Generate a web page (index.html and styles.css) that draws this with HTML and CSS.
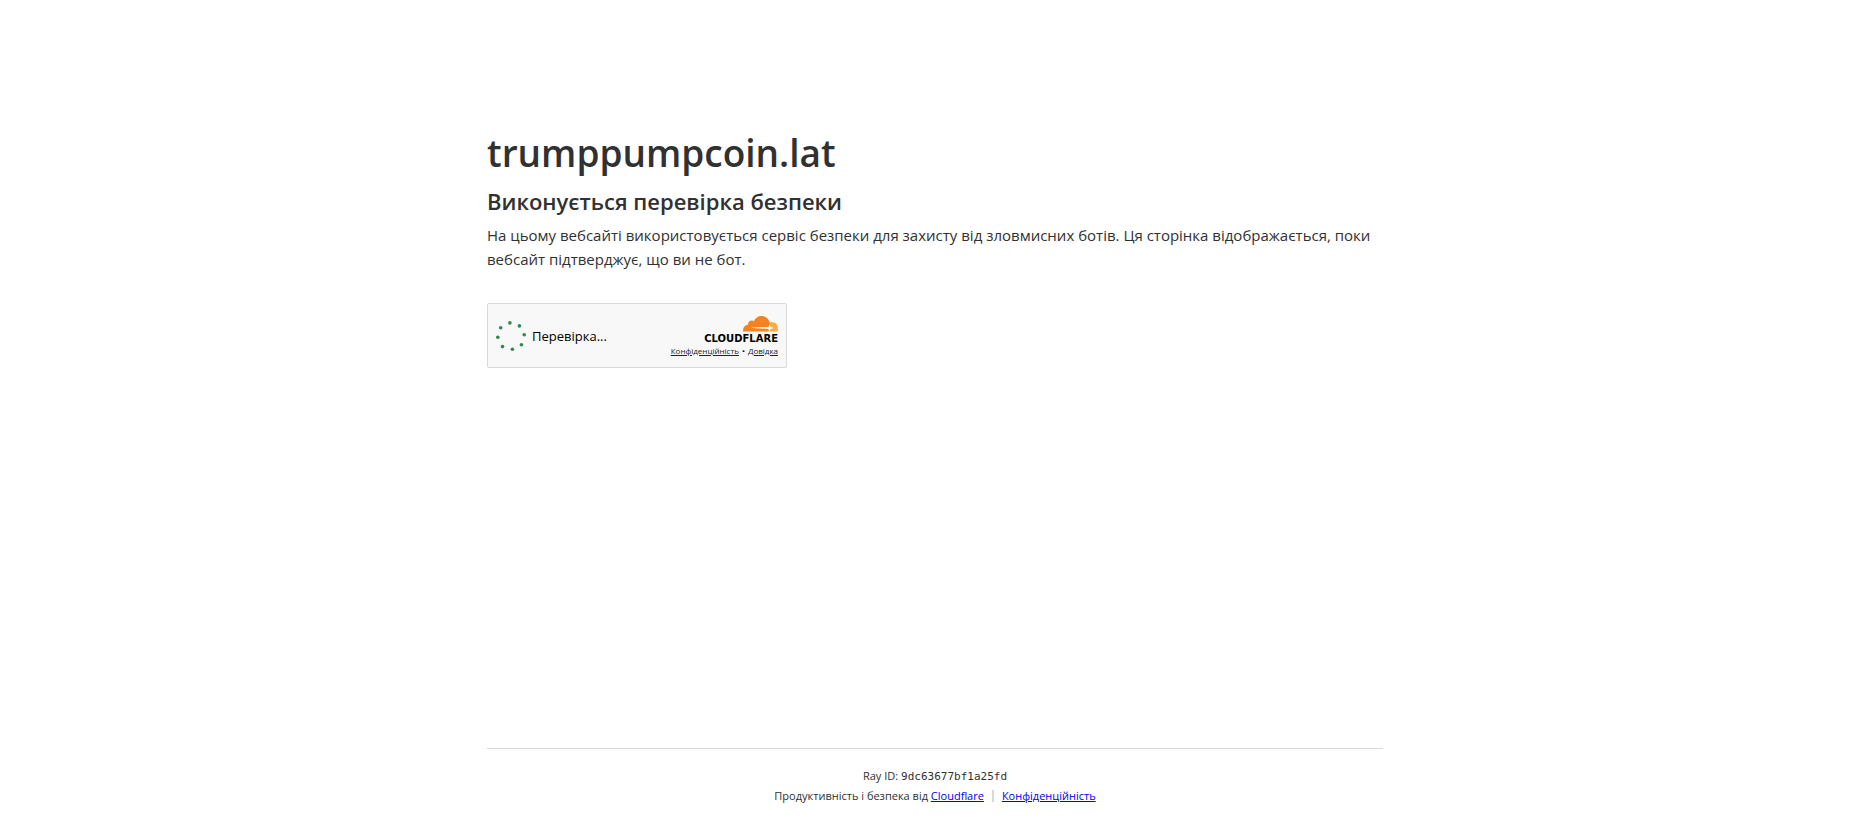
FILE: index.html
```html
<!DOCTYPE html>
<html lang="uk">
<head>
<meta charset="utf-8">
<meta name="viewport" content="width=device-width, initial-scale=1">
<title>trumppumpcoin.lat</title>
<link rel="stylesheet" href="styles.css">
</head>
<body>
<main class="main">
  <h1 class="host">trumppumpcoin.lat</h1>
  <h2 class="title">Виконується перевірка безпеки</h2>
  <p class="lead">На цьому вебсайті використовується сервіс безпеки для захисту від зловмисних ботів. Ця сторінка відображається, поки вебсайт підтверджує, що ви не бот.</p>
  <section class="widget">
    <div class="status" role="status">
      <svg class="spinner" viewBox="0 0 30 30" aria-hidden="true">
        <g fill="#2b8a4b">
          <circle cx="13.9" cy="1.9" r="1.8"/><circle cx="23.4" cy="4.9" r="1.8"/>
          <circle cx="28.2" cy="13.8" r="1.8"/><circle cx="25.4" cy="23.7" r="1.8"/>
          <circle cx="16.4" cy="28.2" r="1.8"/><circle cx="6.5" cy="25.6" r="1.8"/>
          <circle cx="1.8" cy="16.3" r="1.8"/><circle cx="4.7" cy="6.7" r="1.8"/>
        </g>
      </svg>
      <span>Перевірка...</span>
    </div>
    <div class="brand">
      <svg class="cloud" viewBox="0 0 35 16" aria-hidden="true">
        <path fill="#fbad41" d="M28.6 6.1C32.2 6.1 35 8.9 35 12.4q0 1.8-.5 3.1H22l2-5.2 3.900-4.200z"/>
        <path fill="#f6821f" d="M.2 15.5C-.6 12 1.900 8.900 5 8.800 4.700 5.500 8.200 3.400 10.900 5.300 12.200 2 15 0 18.300 0c4.200 0 7.500 2.700 8.600 6.900l-.9 5.300-2 3.300z"/>
        <path fill="#fff" d="M9 11.400l16.500-.4 1-3 1 3.100 3.300 1-3.300 1-1 2.300-1-2.400L9 12z"/>
      </svg>
      <span class="wordmark">CLOUDFLARE</span>
      <nav class="terms"><a href="#privacy">Конфіденційність</a><span>•</span><a href="#help">Довідка</a></nav>
    </div>
  </section>
</main>
<footer class="footer">
  <div class="footer-inner">
    <div>Ray ID: <code class="ray">9dc63677bf1a25fd</code></div>
    <div class="credits">
      <span>Продуктивність і безпека від <a href="#cloudflare">Cloudflare</a></span>
      <span class="privacy"><a href="#policy">Конфіденційність</a></span>
    </div>
  </div>
</footer>
</body>
</html>
```
FILE: styles.css
```css
* { box-sizing: border-box; margin: 0; padding: 0; }
body {
  display: flex;
  flex-direction: column;
  min-height: 100vh;
  background: #fff;
  color: #313131;
  font-family: "Open Sans", "Noto Sans", sans-serif;
}
.main {
  flex: 1;
  width: 100%;
  max-width: 960px;
  margin: 0 auto;
  padding: 123px 32px 0;
}
.host { font-size: 37px; line-height: 60px; font-weight: 600; }
.title { font-size: 22px; line-height: 36px; font-weight: 600; }
.lead { margin-top: 4px; font-size: 15px; line-height: 24px; }
.widget {
  display: flex;
  align-items: center;
  justify-content: space-between;
  width: 300px;
  height: 65px;
  margin-top: 32px;
  padding: 0 8px;
  border: 1px solid #d9d9d9;
  border-radius: 2px;
  background: #f8f8f8;
  color: #000;
}
.status { display: flex; align-items: center; gap: 6px; font-size: 13px; line-height: 20px; }
.spinner { width: 30px; height: 30px; }
.brand { display: flex; flex-direction: column; align-items: flex-end; }
.cloud { width: 35px; height: 16px; }
.wordmark { font: bold 10px/13px "DejaVu Sans", sans-serif; }
.terms { display: flex; gap: 3px; margin-top: 1px; font-size: 8px; line-height: 10px; }
.terms a { color: #232323; }
.footer {
  width: 100%;
  max-width: 960px;
  margin: 0 auto;
  padding: 0 32px;
  font-size: 11px;
  line-height: 19px;
}
.footer-inner { padding: 17px 0 13px; border-top: 1px solid #d9d9d9; text-align: center; }
.footer a { color: #00e; }
.ray { font-family: "DejaVu Sans Mono", monospace; font-size: 11px; }
.credits { display: flex; flex-wrap: wrap; justify-content: center; gap: 8px; }
.privacy { display: flex; align-items: center; gap: 8px; }
.privacy::before { content: ""; width: 2px; height: 12px; background: #d9d9d9; }
```
